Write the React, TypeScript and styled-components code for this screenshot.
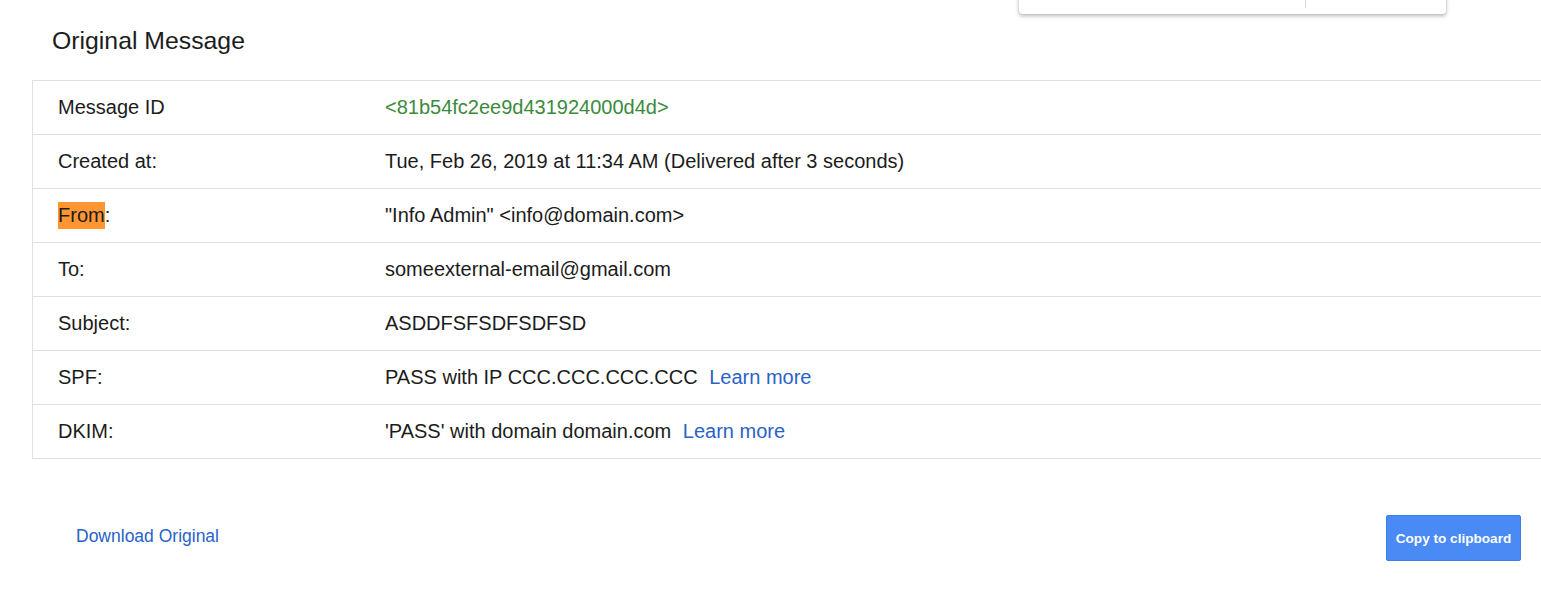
import React from "react";
import styled, { createGlobalStyle } from "styled-components";

const Global = createGlobalStyle`
  html, body { margin: 0; padding: 0; background: #fff; }
  body { font-family: "Liberation Sans", Arial, sans-serif; color: #1c1c1c; overflow: hidden; }
`;

const Page = styled.div`
  position: relative;
  width: 1541px;
  height: 597px;
  overflow: hidden;
`;

const Popup = styled.div`
  position: absolute;
  left: 1019px;
  top: -20px;
  width: 427px;
  height: 34px;
  background: #fff;
  border-radius: 0 0 3px 3px;
  box-shadow: 0 2px 4px rgba(0, 0, 0, 0.28), 0 0 1px rgba(0, 0, 0, 0.3);
`;

const PopupDivider = styled.div`
  position: absolute;
  left: 286px;
  top: 18px;
  width: 1px;
  height: 10px;
  background: #d8d8d8;
`;

const Title = styled.h1`
  margin: 0;
  padding: 26px 0 0 52px;
  height: 80px;
  box-sizing: border-box;
  font-size: 24.8px;
  font-weight: 400;
  line-height: 30px;
  color: #1c1c1c;
`;

const Table = styled.div`
  margin-left: 32px;
  border-top: 1px solid #e0e0e0;
  border-left: 1px solid #e0e0e0;
`;

const Row = styled.div`
  display: grid;
  grid-template-columns: 352px 1fr;
  height: 54px;
  box-sizing: border-box;
  border-bottom: 1px solid #e0e0e0;
  align-items: center;
  font-size: 20px;
`;

const Label = styled.div`
  padding-left: 25px;
  color: #1c1c1c;
`;

const Value = styled.div<{ $green?: boolean }>`
  color: ${(p) => (p.$green ? "#3c8a3c" : "#1c1c1c")};
  white-space: nowrap;
`;

const Mark = styled.mark`
  background: #ff9632;
  color: #1c1c1c;
  padding: 2px 0 3px;
`;

const Learn = styled.a`
  color: #2a62c9;
  text-decoration: none;
  margin-left: 6px;
`;

const Footer = styled.div`
  display: flex;
  align-items: center;
  justify-content: space-between;
  padding: 56px 20px 0 76px;
`;

const Download = styled.a`
  color: #2a62c9;
  font-size: 17.5px;
  text-decoration: none;
  margin-bottom: 3px;
`;

const CopyButton = styled.button`
  width: 135px;
  height: 46px;
  background: #4a8af4;
  color: #fff;
  border: 1px solid #3f7de6;
  border-radius: 2px;
  font-family: "Liberation Sans", Arial, sans-serif;
  font-size: 13.6px;
  font-weight: 700;
  padding: 0;
  cursor: pointer;
`;

const rows: { label: React.ReactNode; value: React.ReactNode; green?: boolean }[] = [
  { label: "Message ID", value: "<81b54fc2ee9d431924000d4d>", green: true },
  { label: "Created at:", value: "Tue, Feb 26, 2019 at 11:34 AM (Delivered after 3 seconds)" },
  { label: (<><Mark>From</Mark>:</>), value: "\"Info Admin\" <info@domain.com>" },
  { label: "To:", value: "someexternal-email@gmail.com" },
  { label: "Subject:", value: "ASDDFSFSDFSDFSD" },
  { label: "SPF:", value: (<>PASS with IP CCC.CCC.CCC.CCC <Learn href="#">Learn more</Learn></>) },
  { label: "DKIM:", value: (<>'PASS' with domain domain.com <Learn href="#">Learn more</Learn></>) },
];

export default function App() {
  return (
    <Page>
      <Global />
      <Popup>
        <PopupDivider />
      </Popup>
      <Title>Original Message</Title>
      <Table>
        {rows.map((r, i) => (
          <Row key={i}>
            <Label>{r.label}</Label>
            <Value $green={r.green}>{r.value}</Value>
          </Row>
        ))}
      </Table>
      <Footer>
        <Download href="#">Download Original</Download>
        <CopyButton>Copy to clipboard</CopyButton>
      </Footer>
    </Page>
  );
}
